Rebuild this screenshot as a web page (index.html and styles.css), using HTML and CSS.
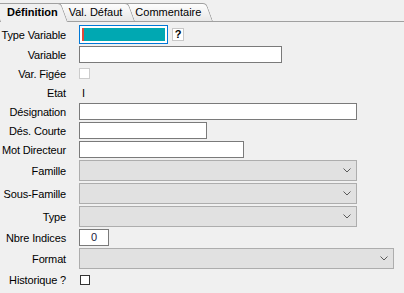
FILE: index.html
```html
<!DOCTYPE html>
<html lang="fr">
<head>
    <meta charset="UTF-8">
    <meta name="viewport" content="width=device-width, initial-scale=1.0">
    <title>Définition</title>
    <link rel="stylesheet" href="styles.css">
</head>
<body>
    <div class="tabs">
        <div class="tab active">Définition</div>
        <div class="tab second">Val. Défaut</div>
        <div class="tab third">Commentaire</div>
    </div>

    <div class="form">
        <div class="row tall">
            <span class="label">Type Variable</span>
            <div class="focus-box"><span class="caret"></span></div>
            <span class="help">?</span>
        </div>
        <div class="row">
            <span class="label">Variable</span>
            <div class="input w-variable"></div>
        </div>
        <div class="row">
            <span class="label">Var. Figée</span>
            <span class="check disabled"></span>
        </div>
        <div class="row">
            <span class="label">Etat</span>
            <span class="value">I</span>
        </div>
        <div class="row">
            <span class="label">Désignation</span>
            <div class="input w-long"></div>
        </div>
        <div class="row">
            <span class="label">Dés. Courte</span>
            <div class="input w-short"></div>
        </div>
        <div class="row">
            <span class="label">Mot Directeur</span>
            <div class="input w-mot"></div>
        </div>
        <div class="row combo-row">
            <span class="label">Famille</span>
            <div class="combo w-long"><svg width="8" height="5" viewBox="0 0 8 5"><polyline points="0.5,0.5 4,4 7.5,0.5" fill="none" stroke="#5a5a5a" stroke-width="1"/></svg></div>
        </div>
        <div class="row combo-row">
            <span class="label">Sous-Famille</span>
            <div class="combo w-long"><svg width="8" height="5" viewBox="0 0 8 5"><polyline points="0.5,0.5 4,4 7.5,0.5" fill="none" stroke="#5a5a5a" stroke-width="1"/></svg></div>
        </div>
        <div class="row combo-row">
            <span class="label">Type</span>
            <div class="combo w-long"><svg width="8" height="5" viewBox="0 0 8 5"><polyline points="0.5,0.5 4,4 7.5,0.5" fill="none" stroke="#5a5a5a" stroke-width="1"/></svg></div>
        </div>
        <div class="row">
            <span class="label">Nbre Indices</span>
            <div class="input w-num">0</div>
        </div>
        <div class="row combo-row">
            <span class="label">Format</span>
            <div class="combo w-format"><svg width="8" height="5" viewBox="0 0 8 5"><polyline points="0.5,0.5 4,4 7.5,0.5" fill="none" stroke="#5a5a5a" stroke-width="1"/></svg></div>
        </div>
        <div class="row">
            <span class="label">Historique ?</span>
            <span class="check"></span>
        </div>
    </div>
</body>
</html>
```

FILE: styles.css
```css
body {
    margin: 0;
    background-color: #f0f0f0;
    font-family: "Liberation Sans", Arial, sans-serif;
    font-size: 11px;
    color: #000;
}
.tabs {
    display: flex;
    align-items: flex-end;
    height: 21px;
    border-bottom: 1px solid #a0a0a0;
    position: relative;
}
.tab {
    position: relative;
    height: 18px;
    line-height: 18px;
    padding: 0 12px 0 7px;
    margin-left: -7px;
    z-index: 1;
    white-space: nowrap;
}
.tab::before {
    content: '';
    position: absolute;
    top: 0;
    left: 0;
    right: 0;
    bottom: 0;
    border: 1px solid #a0a0a0;
    border-bottom: none;
    border-radius: 3px 4px 0 0;
    background: linear-gradient(#fdfdfd, #e8e8e8);
    transform: skewX(20deg);
    transform-origin: bottom left;
    z-index: -1;
}
.tab.active {
    margin-left: 0;
    height: 19px;
    line-height: 19px;
    margin-bottom: -1px;
    font-weight: bold;
    padding-right: 10px;
    z-index: 4;
}
.tab.active::before {
    background: #f0f0f0;
}
.tab.second {
    z-index: 3;
    padding-left: 8px;
}
.tab.third {
    z-index: 2;
    padding-left: 8px;
}
.form {
    display: flex;
    flex-direction: column;
    gap: 2px;
    margin-top: 3px;
}
.row {
    display: flex;
    align-items: center;
    height: 17px;
}
.row.tall {
    height: 19px;
}
.row.combo-row {
    height: 21px;
}
.label {
    width: 66px;
    margin-right: 13px;
    text-align: right;
    white-space: nowrap;
    letter-spacing: -0.15px;
}
.focus-box {
    box-sizing: border-box;
    width: 89px;
    height: 19px;
    border: 1px solid #0078d7;
    padding: 2px;
    background: #fff;
    position: relative;
}
.focus-box::before {
    content: '';
    display: block;
    height: 100%;
    background-color: #00a8b2;
}
.caret {
    position: absolute;
    left: 2px;
    top: 2px;
    width: 2px;
    height: 13px;
    background-color: #e0483a;
}
.help {
    box-sizing: border-box;
    width: 12px;
    height: 13px;
    margin-left: 4px;
    background: #fff;
    border: 1px solid #c8c8c8;
    font-weight: bold;
    font-size: 11px;
    line-height: 11px;
    text-align: center;
}
.input {
    box-sizing: border-box;
    height: 17px;
    background: #fff;
    border: 1px solid #7a7a7a;
    line-height: 15px;
}
.w-variable { width: 203px; }
.w-long { width: 278px; }
.w-short { width: 128px; }
.w-mot { width: 165px; }
.w-format { width: 315px; }
.w-num {
    width: 30px;
    padding-left: 11px;
    color: #1a1a40;
}
.combo {
    box-sizing: border-box;
    height: 21px;
    background: #e1e1e1;
    border: 1px solid #adadad;
    display: flex;
    align-items: center;
    justify-content: flex-end;
    padding-right: 5px;
}
.check {
    box-sizing: border-box;
    width: 10px;
    height: 10px;
    margin-left: 1px;
    background: #fff;
    border: 1px solid #333;
}
.check.disabled {
    width: 11px;
    height: 11px;
    margin-left: 0;
    border-color: #cccccc;
}
.value {
    padding-left: 3px;
}
```
